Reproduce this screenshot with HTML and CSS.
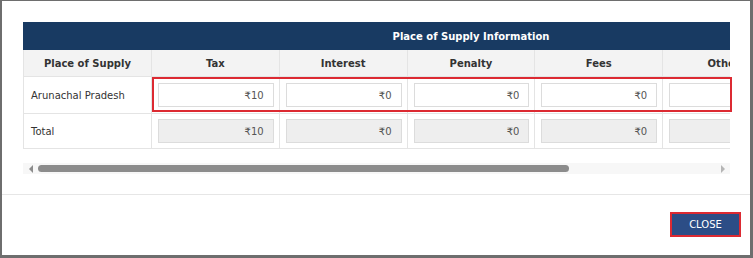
FILE: index.html
```html
<!DOCTYPE html>
<html lang="en">
<head>
  <meta charset="UTF-8" />
  <title>Place of Supply Information</title>
  <link rel="stylesheet" href="styles.css">
</head>
<body>
  <div class="modal">
    <div class="modal-body">
      <div class="table-wrap">
        <div class="scroll-area">
          <table class="pos-table">
            <thead>
              <tr class="title-row"><th colspan="7">Place of Supply Information</th></tr>
              <tr class="head-row">
                <th>Place of Supply</th>
                <th>Tax</th>
                <th>Interest</th>
                <th>Penalty</th>
                <th>Fees</th>
                <th>Others</th>
                <th>Total</th>
              </tr>
            </thead>
            <tbody>
              <tr class="row-state">
                <td class="name">Arunachal Pradesh</td>
                <td><input type="text" value="₹10"></td>
                <td><input type="text" value="₹0"></td>
                <td><input type="text" value="₹0"></td>
                <td><input type="text" value="₹0"></td>
                <td><input type="text" value="₹0"></td>
                <td><input type="text" value="₹10" disabled></td>
              </tr>
              <tr class="row-total">
                <td class="name">Total</td>
                <td><input type="text" value="₹10" disabled></td>
                <td><input type="text" value="₹0" disabled></td>
                <td><input type="text" value="₹0" disabled></td>
                <td><input type="text" value="₹0" disabled></td>
                <td><input type="text" value="₹0" disabled></td>
                <td><input type="text" value="₹10" disabled></td>
              </tr>
            </tbody>
          </table>
        </div>
        <div class="scrollbar">
          <span class="arrow left"></span>
          <div class="track"><div class="thumb"></div></div>
          <span class="arrow right"></span>
        </div>
        <div class="highlight"></div>
      </div>
    </div>
    <div class="modal-footer">
      <button class="btn-close">CLOSE</button>
    </div>
  </div>
</body>
</html>
```

FILE: styles.css
```css
/* === Base === */
body{
  margin:0;
  background:#6e6e6e;
  font-family:"DejaVu Sans",Verdana,sans-serif;
  font-size:10px;
  color:#333;
}
.modal{
  margin:1px 3px 3px 2px;
  height:254px;
  background:#fff;
  display:flex;
  flex-direction:column;
}

/* === Body with table === */
.modal-body{padding:21px 20px 20px 21px;border-bottom:1px solid #e6e6e6}
.table-wrap{position:relative}
.scroll-area{width:707px;overflow:hidden}
.pos-table{width:896px;table-layout:fixed;border-collapse:collapse}
.pos-table th,.pos-table td{border:1px solid #e4e4e4;padding:0}
.title-row th{
  background:#183a62;
  border-color:#183a62;
  color:#fff;
  height:26px;
  font-size:10px;
  font-weight:bold;
  text-align:center;
}
.head-row th{
  background:#f3f3f3;
  height:26px;
  font-weight:bold;
  text-align:center;
  color:#333;
}
.row-state td{height:36px}
.row-total td{height:34px}
.pos-table td{padding:0 5px 0 6px}
.pos-table td.name{padding-left:7px;color:#333}
.pos-table input{
  box-sizing:border-box;
  width:100%;
  height:24px;
  border:1px solid #dcdcdc;
  padding:0 9px 0 4px;
  text-align:right;
  font-family:inherit;
  font-size:10px;
  color:#555;
  background:#fff;
  display:block;
}
.pos-table input:disabled{background:#eee;color:#555}

/* === Fake horizontal scrollbar === */
.scrollbar{
  margin-top:14px;
  width:707px;
  height:11px;
  background:#f7f7f7;
  display:flex;
  align-items:center;
}
.arrow{width:0;height:0;border-top:4px solid transparent;border-bottom:4px solid transparent}
.arrow.left{margin:0 5px 0 6px;border-right:4px solid #8c8c8c}
.arrow.right{margin:0 5px 0 4px;border-left:4px solid #b5b5b5}
.track{flex:1;height:7px}
.thumb{width:531px;height:7px;border-radius:4px;background:#8c8c8c}

/* === Annotation box === */
.highlight{
  position:absolute;
  left:129px;
  top:55px;
  width:576px;
  height:31px;
  border:2px solid #dc2a32;
}

/* === Footer === */
.modal-footer{
  flex:1;
  display:flex;
  justify-content:flex-end;
  align-items:flex-start;
  padding:17px 9px 0 0;
}
.btn-close{
  width:71px;
  height:25px;
  background:#2c4d86;
  color:#fff;
  border:2px solid #dc2a32;
  font-family:inherit;
  font-size:10px;
  cursor:pointer;
}
```
